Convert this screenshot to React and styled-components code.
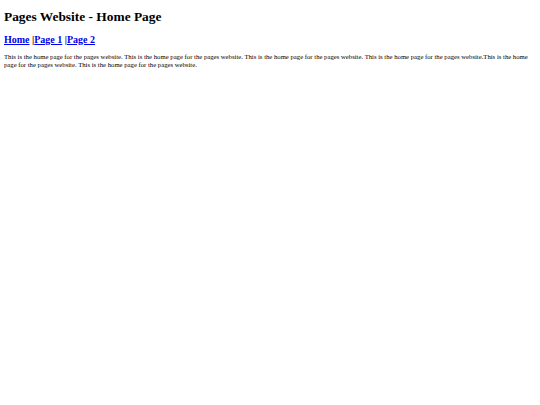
import styled, { createGlobalStyle } from "styled-components";

const GlobalStyle = createGlobalStyle`
  body {
    margin: 4px;
    background: #ffffff;
    color: #000000;
    font-family: "Liberation Serif", "Times New Roman", serif;
  }
`;

const Title = styled.h1`
  font-size: 13.4px;
  font-weight: bold;
  margin: 5px 0 9px;
`;

const Nav = styled.h3`
  font-size: 10px;
  font-weight: bold;
  margin: 0 0 8px;
`;

const NavLink = styled.a`
  color: #0000ee;
  text-decoration: underline;
`;

const Text = styled.p`
  font-size: 6.7px;
  line-height: 7.7px;
  margin: 0;
`;

function App() {
  return (
    <>
      <GlobalStyle />
      <Title>Pages Website - Home Page</Title>
      <Nav>
        <NavLink href="#">Home</NavLink> |<NavLink href="#">Page 1</NavLink>{" "}
        |<NavLink href="#">Page 2</NavLink>
      </Nav>
      <Text>
        This is the home page for the pages website. This is the home page for
        the pages website. This is the home page for the pages website. This is
        the home page for the pages website.This is the home page for the pages
        website. This is the home page for the pages website.
      </Text>
    </>
  );
}

export default App;
